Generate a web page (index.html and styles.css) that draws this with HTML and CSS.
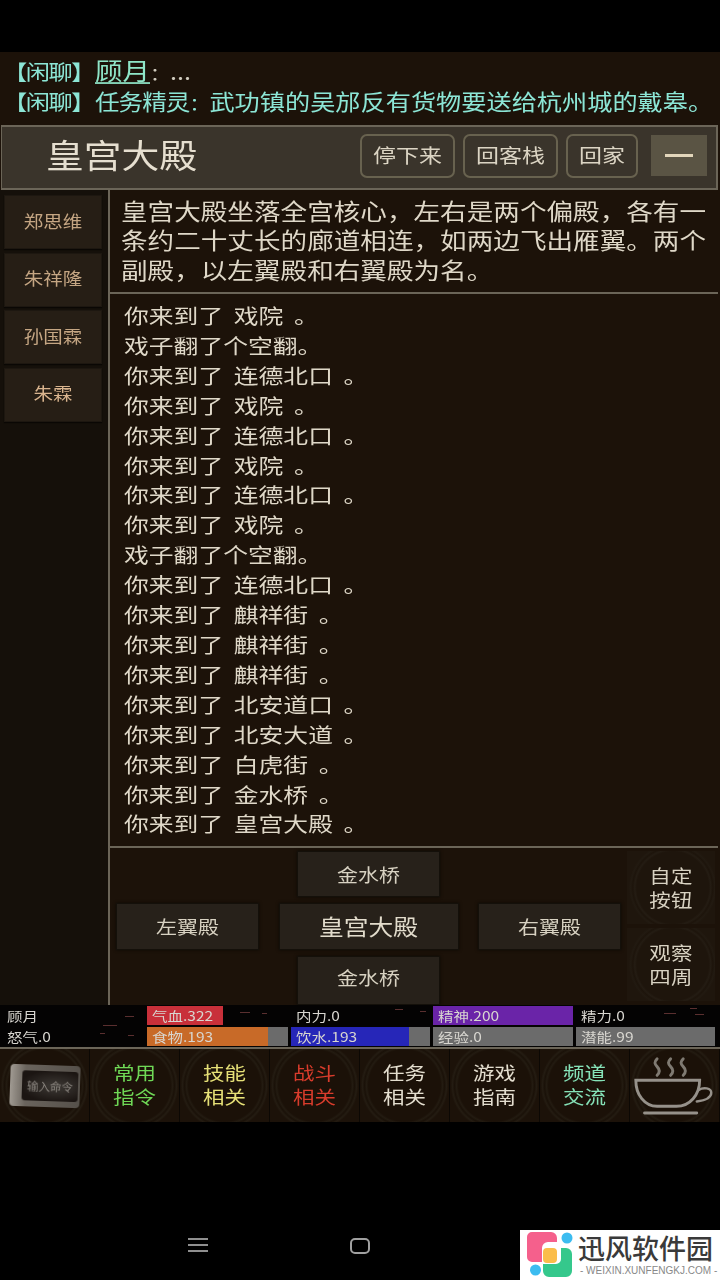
FILE: index.html
```html
<!DOCTYPE html>
<html lang="zh-CN">
<head>
<meta charset="utf-8">
<title>皇宫大殿</title>
<link rel="stylesheet" href="styles.css">
</head>
<body>
<div class="screen">
  <div class="status-blank"></div>
  <div class="app">
    <section class="chat">
      <div class="chat-line"><span class="sq"><span class="chat-tag">【闲聊】</span><a class="chat-name">顾月</a><span class="chat-dim"><span class="chat-colon">：</span>...</span></span></div>
      <div class="chat-line"><span class="sq"><span class="chat-tag">【闲聊】</span><span class="chat-who">任务精灵<span class="chat-colon">：</span></span>武功镇的吴邡反有货物要送给杭州城的戴皋。</span></div>
    </section>
    <header class="title">
      <h1 class="title-name"><span class="sq">皇宫大殿</span></h1>
      <div class="title-actions">
        <button class="tbtn tbtn-wide"><span class="sq">停下来</span></button>
        <button class="tbtn tbtn-wide"><span class="sq">回客栈</span></button>
        <button class="tbtn tbtn-narrow"><span class="sq">回家</span></button>
        <button class="tbtn-min" aria-label="收起"><span class="min-bar"></span></button>
      </div>
    </header>
    <main class="main">
      <aside class="people">
        <div class="person"><span class="sq">郑思维</span></div>
        <div class="person"><span class="sq">朱祥隆</span></div>
        <div class="person"><span class="sq">孙国霖</span></div>
        <div class="person person-bright"><span class="sq">朱霖</span></div>
      </aside>
      <div class="content">
        <div class="desc">
          <div class="line">皇宫大殿坐落全宫核心，左右是两个偏殿，各有一</div>
          <div class="line">条约二十丈长的廊道相连，如两边飞出雁翼。两个</div>
          <div class="line">副殿，以左翼殿和右翼殿为名。</div>
        </div>
        <div class="log">
          <div class="line">你来到了 戏院 。</div>
          <div class="line">戏子翻了个空翻。</div>
          <div class="line">你来到了 连德北口 。</div>
          <div class="line">你来到了 戏院 。</div>
          <div class="line">你来到了 连德北口 。</div>
          <div class="line">你来到了 戏院 。</div>
          <div class="line">你来到了 连德北口 。</div>
          <div class="line">你来到了 戏院 。</div>
          <div class="line">戏子翻了个空翻。</div>
          <div class="line">你来到了 连德北口 。</div>
          <div class="line">你来到了 麒祥街 。</div>
          <div class="line">你来到了 麒祥街 。</div>
          <div class="line">你来到了 麒祥街 。</div>
          <div class="line">你来到了 北安道口 。</div>
          <div class="line">你来到了 北安大道 。</div>
          <div class="line">你来到了 白虎街 。</div>
          <div class="line">你来到了 金水桥 。</div>
          <div class="line">你来到了 皇宫大殿 。</div>
        </div>
        <nav class="exits">
          <div class="compass">
            <div class="row row-center"><button class="exit exit-n"><span class="sq">金水桥</span></button></div>
            <div class="row row-between">
              <button class="exit exit-m"><span class="sq">左翼殿</span></button>
              <button class="exit exit-here"><span class="sq">皇宫大殿</span></button>
              <button class="exit exit-m"><span class="sq">右翼殿</span></button>
            </div>
            <div class="row row-center"><button class="exit exit-s"><span class="sq">金水桥</span></button></div>
          </div>
          <div class="side-actions">
            <button class="round"><span class="sq">自定<br>按钮</span></button>
            <button class="round"><span class="sq">观察<br>四周</span></button>
          </div>
        </nav>
      </div>
    </main>
    <section class="stats">
      <svg class="specks" viewBox="0 0 720 42" aria-hidden="true">
        <g fill="#5a2f2f">
          <rect x="103" y="20" width="14" height="1"/><rect x="125" y="11" width="9" height="1"/><rect x="128" y="30" width="6" height="1"/>
          <rect x="240" y="7" width="10" height="1"/><rect x="262" y="8" width="5" height="1"/><rect x="395" y="4" width="8" height="1"/>
          <rect x="420" y="6" width="6" height="1"/><rect x="664" y="8" width="12" height="1"/><rect x="695" y="9" width="9" height="1"/>
          <rect x="690" y="3" width="7" height="1"/><rect x="100" y="28" width="5" height="1"/>
        </g>
        <g fill="#a89a90">
          <rect x="530" y="29" width="14" height="1"/><rect x="555" y="27" width="9" height="1"/><rect x="515" y="5" width="6" height="1"/>
          <rect x="650" y="26" width="10" height="1"/><rect x="680" y="27" width="8" height="1"/>
        </g>
      </svg>
      <div class="stat stat-plain"><span class="stat-label">顾月</span></div>
      <div class="stat"><i class="fill fill-red" style="width:54%"></i><span class="stat-label">气血.322</span></div>
      <div class="stat stat-plain"><span class="stat-label">内力.0</span></div>
      <div class="stat"><i class="fill fill-purple" style="width:100%"></i><span class="stat-label">精神.200</span></div>
      <div class="stat stat-plain"><span class="stat-label">精力.0</span></div>
      <div class="stat stat-plain"><span class="stat-label">怒气.0</span></div>
      <div class="stat stat-track"><i class="fill fill-orange" style="width:86%"></i><span class="stat-label">食物.193</span></div>
      <div class="stat stat-track"><i class="fill fill-blue" style="width:85%"></i><span class="stat-label">饮水.193</span></div>
      <div class="stat stat-track"><span class="stat-label">经验.0</span></div>
      <div class="stat stat-track"><span class="stat-label">潜能.99</span></div>
    </section>
    <nav class="menu">
      <button class="menu-btn"><span class="cmd"><span class="cmd-in">输入命令</span></span></button>
      <button class="menu-btn c-green"><span class="sq">常用<br>指令</span></button>
      <button class="menu-btn c-yellow"><span class="sq">技能<br>相关</span></button>
      <button class="menu-btn c-red"><span class="sq">战斗<br>相关</span></button>
      <button class="menu-btn c-white"><span class="sq">任务<br>相关</span></button>
      <button class="menu-btn c-white"><span class="sq">游戏<br>指南</span></button>
      <button class="menu-btn c-teal"><span class="sq">频道<br>交流</span></button>
      <button class="menu-btn" aria-label="茶杯">
        <svg class="cup" width="92" height="73" viewBox="0 0 92 73" fill="none" stroke="#96918a" stroke-linecap="round">
          <path d="M28 9c-3 3-3 5 0 8s3 6 0 9" stroke="#7f7a72" stroke-width="3"/>
          <path d="M42 9c-3 3-3 5 0 8s3 6 0 9" stroke="#7f7a72" stroke-width="3"/>
          <path d="M55 9c-3 3-3 5 0 8s3 6 0 9" stroke="#7f7a72" stroke-width="3"/>
          <path d="M6 31H72C72 46 62 58 48 58H28C15 58 6 46 6 31Z" stroke-width="3"/>
          <path d="M71 41c5-3 13-2 13 3 0 5-7 8-15 9" stroke-width="2.5"/>
          <path d="M15 65H69" stroke-width="3"/>
        </svg>
      </button>
    </nav>
  </div>
  <div class="sysnav">
    <svg width="20" height="16" viewBox="0 0 20 16" fill="none" stroke="#8f8f8f" stroke-width="2" aria-hidden="true"><path d="M0 2H20M0 8H20M0 14H20"/></svg>
    <svg width="22" height="18" viewBox="0 0 22 18" fill="none" stroke="#a0a0a0" stroke-width="2" aria-hidden="true"><rect x="2" y="2" width="18" height="14" rx="4"/></svg>
  </div>
  <aside class="watermark">
    <svg class="wm-logo" width="58" height="50" viewBox="0 0 58 50" aria-hidden="true">
      <path fill="#f5608c" d="M12 2H31a6 6 0 0 1 6 6V12H28a6 6 0 0 0-6 6V32H12a5 5 0 0 1-5-5V7a5 5 0 0 1 5-5Z"/>
      <circle cx="47" cy="8" r="5.5" fill="#3cbcf0"/>
      <circle cx="15.5" cy="40" r="5.5" fill="#3cbcf0"/>
      <rect x="23" y="18" width="14" height="15" rx="4" fill="#fbbd4a"/>
      <path fill="#35c88c" d="M46 18a6 6 0 0 1 6 6V41a6 6 0 0 1-6 6H29a6 6 0 0 1-6-6V34H36a5 5 0 0 0 5-5V18Z"/>
    </svg>
    <div class="wm-text">
      <div class="wm-name">迅风软件园</div>
      <div class="wm-url">- WEIXIN.XUNFENGKJ.COM -</div>
    </div>
  </aside>
</div>
</body>
</html>
```

FILE: styles.css
```css
* { box-sizing: border-box; }
html, body { margin: 0; padding: 0; background: #000; }
body { font-family: "Noto Sans CJK SC", "Noto Sans", sans-serif; }
button { font-family: inherit; padding: 0; margin: 0; cursor: pointer; }

.screen { position: relative; width: 720px; height: 1280px; background: #000; display: flex; flex-direction: column; overflow: hidden; }
.status-blank { height: 52px; flex: none; }
.app { height: 1070px; flex: none; display: flex; flex-direction: column; background: #1c1209; filter: blur(.4px); }

.sq { display: inline-block; transform: translateY(-2px) scaleY(.86); }
.line { transform: scaleY(.84); white-space: nowrap; word-spacing: 5px; }

/* chat */
.chat { height: 73px; flex: none; padding: 4px 0 0 3px; color: #8ce6d6; font-size: 25.2px; line-height: 31px; white-space: nowrap; }
.chat-line { height: 31px; }
.chat-tag { display: inline-block; width: 92px; letter-spacing: -1.4px; font-size: 24.2px; white-space: nowrap; }
.chat-who { letter-spacing: -1px; font-size: 24.6px; }
.chat-colon { display: inline-block; width: 20px; font-size: 20px; letter-spacing: 0; }
.chat-name { color: #8fe6c8; text-decoration: underline; text-underline-offset: 3px; font-size: 27.5px; }
.chat-dim { color: #cfcabd; }

/* title */
.title { height: 65px; flex: none; margin: 0 2px 0 1px; padding-bottom: 4px; display: flex; align-items: center; justify-content: space-between; background: #3a342b; border: 2px solid #6b6558; border-left-width: 1px; }
.title-name { margin: 0 0 0 44px; font-size: 37.8px; line-height: 40px; font-weight: 400; color: #e6dfd0; }
.title-actions { display: flex; align-items: center; margin-right: 9px; }
.tbtn { height: 44px; margin-right: 8px; background: #3a342b; border: 2px solid #68624f; border-radius: 7px; color: #dcd5c4; font-size: 23px; }
.tbtn-wide { width: 95px; }
.tbtn-narrow { width: 72px; margin-right: 13px; }
.tbtn-min { width: 56px; height: 41px; background: #5a5444; border: 0; display: flex; align-items: center; justify-content: center; }
.min-bar { display: block; width: 28px; height: 3px; background: #e2d6bb; }

/* main */
.main { height: 815px; flex: none; display: flex; }
.people { width: 108px; flex: none; padding: 5px 6px 0 4px; display: flex; flex-direction: column; gap: 3.5px; background: #15100a; }
.person { height: 54px; display: flex; align-items: center; justify-content: center; background: #261e15; box-shadow: inset 0 0 0 1px #1d1710, 0 1px 1px #0a0704; color: #c5a683; font-size: 19.5px; }
.person-bright { color: #d9b48e; }
.content { flex: 1; min-width: 0; border-left: 2px solid #6b6558; display: flex; flex-direction: column; margin-right: 2px; }
.desc { height: 104px; flex: none; padding: 5.5px 0 0 11px; border-bottom: 2px solid #6b6558; color: #dfd8c8; font-size: 26.6px; line-height: 29.5px; }
.desc .line { word-spacing: 0; }
.log { height: 554px; flex: none; padding: 7px 0 0 14px; border-bottom: 2px solid #6b6558; color: #dfd8c8; font-size: 24.8px; line-height: 29.9px; }

/* exits */
.exits { flex: 1; min-height: 0; display: flex; padding: 3px 3px 0 6px; }
.compass { width: 505px; flex: none; display: flex; flex-direction: column; gap: 6px; }
.row { display: flex; }
.row-center { justify-content: center; }
.row-between { justify-content: space-between; }
.exit { background: #27211a; border: 1px solid #14100a; color: #d8d2c2; font-size: 21px; box-shadow: 0 0 3px #0c0905; }
.exit .sq { transform: translateY(-1px) scaleY(.86); }
.exit-n { width: 143px; height: 46px; }
.exit-n .sq { transform: scaleY(.86); }
.exit-m { width: 143px; height: 47px; }
.exit-here { width: 180px; height: 47px; font-size: 24.8px; color: #e2dccc; }
.exit-s { width: 143px; height: 49px; padding-bottom: 6px; }
.side-actions { width: 88px; margin-left: 6px; display: flex; flex-direction: column; gap: 4px; }
.round { height: 73px; border: 0; color: #d8d2c2; font-size: 21.5px; letter-spacing: .3px; line-height: 28px; overflow: hidden; background: radial-gradient(circle at 52% 50%, #1e150c 0 36px, #241c13 38px, #1d140b 40px, #221a11 42px, #1f160d 44px); }
.round .sq { transform: translateY(-1px) scaleY(.86); }

/* stats */
.stats { position: relative; height: 44px; flex: none; background: #040303; border-bottom: 2px solid #6b6558; padding: 1px 2px 0 2px; display: grid; grid-template-columns: 145px 144px 142px 143px 142px; grid-template-rows: 19px 19px; row-gap: 2px; color: #d8d6d0; font-size: 15.5px; line-height: 19px; }
.specks { position: absolute; left: 0; top: 0; width: 720px; height: 42px; }
.stat { position: relative; margin-right: 3px; overflow: hidden; white-space: nowrap; }
.stat-track { background: #6b6b6b; }
.fill { position: absolute; left: 0; top: 0; bottom: 0; }
.fill-red { background: #c8303a; }
.fill-purple { background: #6a24a8; }
.fill-orange { background: #c86a28; }
.fill-blue { background: #2626b8; }
.stat-label { position: relative; display: block; padding-left: 5px; transform: scaleY(.84); }

/* menu */
.menu { flex: 1; min-height: 0; display: flex; }
.menu-btn { flex: 1 1 0; min-width: 0; height: 100%; border: 0; border-right: 1px solid #0c0804; display: flex; align-items: center; justify-content: center; font-size: 21.5px; line-height: 28px; overflow: hidden; background: radial-gradient(ellipse 46px 46px at 50% 50%, #1b1108 0 36px, #231b11 38px, #1a1108 40px, #241c12 42px, #1c1209 44px); }
.c-green { color: #6fd856; }
.c-yellow { color: #e6e077; }
.c-red { color: #d83c2c; }
.c-white { color: #e4decf; }
.c-teal { color: #86e2b8; }
.cmd { width: 70px; height: 42px; margin-left: 1px; display: flex; align-items: center; justify-content: center; border-radius: 4px; background: linear-gradient(90deg, #a09a92, #6a645d 22%, #55504a); transform: rotate(2deg); filter: blur(.6px); }
.cmd-in { width: 56px; height: 30px; margin-left: 10px; border-radius: 3px; background: radial-gradient(ellipse at 60% 50%, #3e3a36, #1b1512 75%); color: #8a857f; font-size: 11.5px; line-height: 30px; text-align: center; white-space: nowrap; }

/* system nav */
.sysnav { flex: 1; min-height: 0; display: flex; align-items: flex-start; padding: 115px 0 0 188px; gap: 141px; }

/* watermark */
.watermark { position: absolute; left: 520px; bottom: 0; width: 200px; height: 50px; background: #fff; display: flex; }
.wm-logo { flex: none; }
.wm-text { min-width: 0; }
.wm-name { font-size: 27px; line-height: 32px; margin-top: 2px; font-weight: 500; color: #3a3a3a; white-space: nowrap; }
.wm-url { font-family: "Liberation Sans", sans-serif; font-size: 10px; line-height: 13px; margin-left: 2px; color: #888; white-space: nowrap; }
```
